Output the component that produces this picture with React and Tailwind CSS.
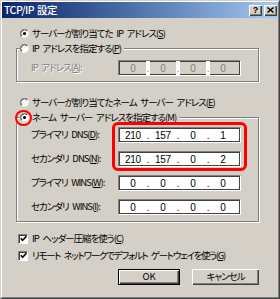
import React from 'react';

// Win2000-style "TCP/IP 設定" dialog

function Radio({ checked }) {
  return (
    <svg width="9" height="9" viewBox="0 0 12 12" className="shrink-0">
      <circle cx="6" cy="6" r="5.5" fill="#fff" />
      <path d="M1.76 10.24 A6 6 0 0 1 10.24 1.76" fill="none" stroke="#808080" strokeWidth="1.2" />
      <path d="M2.6 9.4 A4.8 4.8 0 0 1 9.4 2.6" fill="none" stroke="#404040" strokeWidth="1.2" />
      {checked && <circle cx="6" cy="6" r="2.1" fill="#000" />}
    </svg>
  );
}

function Check() {
  return (
    <span className="w-[10px] h-[10px] shrink-0 bg-white border border-t-[#808080] border-l-[#808080] border-r-white border-b-white shadow-[inset_1px_1px_0_#404040] flex items-center justify-center">
      <svg width="7" height="7" viewBox="0 0 7 7">
        <path d="M0.8 3.2 L2.6 5.2 L6.4 1.2" stroke="#000" strokeWidth="1.6" fill="none" />
      </svg>
    </span>
  );
}

function IpField({ values, disabled }) {
  return (
    <div
      className={`w-[123px] h-[16px] shrink-0 border border-t-[#808080] border-l-[#808080] border-r-white border-b-white shadow-[inset_1px_1px_0_#404040,inset_-1px_-1px_0_#404040] font-['Liberation_Sans',sans-serif] text-[10px] tracking-[-0.3px] [word-spacing:0px] leading-none ${
        disabled ? 'bg-[#d4d0c8] text-[#808080]' : 'bg-white text-black'
      }`}
    >
      <div className="flex h-full pl-[1px]">
        {values.map((v, i) => (
          <React.Fragment key={i}>
            <span className="w-[26px] text-center pt-[3px]">{v}</span>
            {i < 3 && (
              <span
                className={`w-[4px] flex items-end justify-center pb-[1px] ${disabled ? 'bg-white' : ''}`}
              >
                .
              </span>
            )}
          </React.Fragment>
        ))}
      </div>
    </div>
  );
}

function FieldRow({ label, values, disabled }) {
  return (
    <div className="flex items-center pl-[14px]">
      <span
        className={`w-[87px] ${disabled ? 'text-[#808080] [text-shadow:1px_1px_0_#fff]' : ''}`}
      >
        {label}
      </span>
      <IpField values={values} disabled={disabled} />
    </div>
  );
}

function TitleButton({ children }) {
  return (
    <span className="w-[13px] h-[11px] bg-[#d4d0c8] shadow-[inset_1px_1px_0_#fff,inset_-1px_-1px_0_#404040,inset_-2px_-2px_0_#808080] flex items-center justify-center">
      {children}
    </span>
  );
}

export default function App() {
  return (
    <div className="w-[280px] h-[299px] bg-[#d4d0c8] border border-t-[#d4d0c8] border-l-[#d4d0c8] border-r-[#404040] border-b-[#404040] font-['Noto_Sans_CJK_JP',sans-serif] text-[9.5px] leading-none tracking-[-1px] [word-spacing:2.5px] [font-feature-settings:'palt'] text-black">
      <div className="h-full border border-t-white border-l-white border-r-[#808080] border-b-[#808080] flex flex-col">
        {/* title bar */}
        <div className="h-[16px] flex items-center pl-[2px] pr-[1px] bg-linear-to-r from-[#0a246a] to-[#a6caf0]">
          <span className="text-white text-[10.5px] font-medium tracking-[-0.5px] [word-spacing:1px] flex-1">TCP/IP 設定</span>
          <div className="flex gap-[2px]">
            <TitleButton>
              <span className="font-['Liberation_Sans',sans-serif] font-bold text-[9px] tracking-normal">?</span>
            </TitleButton>
            <TitleButton>
              <svg width="7" height="6" viewBox="0 0 7 6">
                <path d="M0.5 0.5 L6.5 5.5 M6.5 0.5 L0.5 5.5" stroke="#000" strokeWidth="1.4" />
              </svg>
            </TitleButton>
          </div>
        </div>

        {/* body */}
        <div className="flex-1 flex flex-col pt-[8px] pl-[14px] pr-[19px]">
          <div className="h-[15px] pl-[4px] flex items-center gap-[3px]">
            <Radio checked />
            <span>
              サーバーが割り当てた IP アドレス(<u>S</u>)
            </span>
          </div>

          <fieldset className="border border-[#808080] shadow-[inset_1px_1px_0_#fff,1px_1px_0_#fff]">
            <legend className="ml-[3px] pr-[3px] bg-[#d4d0c8] h-[15px] flex items-center gap-[3px]">
              <Radio />
              <span>
                IP アドレスを指定する(<u>P</u>)
              </span>
            </legend>
            <div className="pt-[4px] pb-[5px]">
              <FieldRow
                label={
                  <>
                    IP アドレス(<u>A</u>):
                  </>
                }
                values={['0', '0', '0', '0']}
                disabled
              />
            </div>
          </fieldset>

          <div className="h-[15px] mt-[13px] pl-[4px] flex items-center gap-[3px]">
            <Radio />
            <span>
              サーバーが割り当てたネーム サーバー アドレス(<u>E</u>)
            </span>
          </div>

          <fieldset className="border border-[#808080] shadow-[inset_1px_1px_0_#fff,1px_1px_0_#fff]">
            <legend className="relative ml-[3px] pr-[3px] bg-[#d4d0c8] h-[15px] flex items-center gap-[3px]">
              <Radio checked />
              <span>
                ネーム サーバー アドレスを指定する(<u>M</u>)
              </span>
              <span className="absolute left-[-5px] top-[0px] w-[17px] h-[16px] rounded-full border-[2.5px] border-[#ff0000]" />
            </legend>
            <div className="relative flex flex-col gap-[8px] pt-[2px] pb-[6px]">
              <FieldRow
                label={
                  <>
                    プライマリ DNS(<u>D</u>):
                  </>
                }
                values={['210', '157', '0', '1']}
              />
              <FieldRow
                label={
                  <>
                    セカンダリ DNS(<u>N</u>):
                  </>
                }
                values={['210', '157', '0', '2']}
              />
              <FieldRow
                label={
                  <>
                    プライマリ WINS(<u>W</u>):
                  </>
                }
                values={['0', '0', '0', '0']}
              />
              <FieldRow
                label={
                  <>
                    セカンダリ WINS(<u>I</u>):
                  </>
                }
                values={['0', '0', '0', '0']}
              />
              <span className="absolute left-[95px] top-[-3px] w-[135px] h-[49px] rounded-[6px] border-[3px] border-[#ff0000]" />
            </div>
          </fieldset>

          <div className="mt-[8px] pl-[2px] flex flex-col">
            <div className="h-[17px] flex items-center gap-[4px]">
              <Check />
              <span>
                IP ヘッダー圧縮を使う(<u>C</u>)
              </span>
            </div>
            <div className="h-[17px] flex items-center gap-[4px]">
              <Check />
              <span className="whitespace-nowrap tracking-[-1.3px]">
                リモート ネットワークでデフォルト ゲートウェイを使う(<u>G</u>)
              </span>
            </div>
          </div>

          <div className="mt-[5px] flex justify-end gap-[12px]">
            <button className="w-[62px] h-[16px] border border-black bg-[#d4d0c8] shadow-[inset_1px_1px_0_#fff,inset_-1px_-1px_0_#404040,inset_-2px_-2px_0_#808080] flex items-center justify-center tracking-normal">
              OK
            </button>
            <button className="w-[67px] h-[16px] bg-[#d4d0c8] shadow-[inset_1px_1px_0_#fff,inset_-1px_-1px_0_#404040,inset_-2px_-2px_0_#808080] flex items-center justify-center">
              キャンセル
            </button>
          </div>
        </div>
      </div>
    </div>
  );
}
